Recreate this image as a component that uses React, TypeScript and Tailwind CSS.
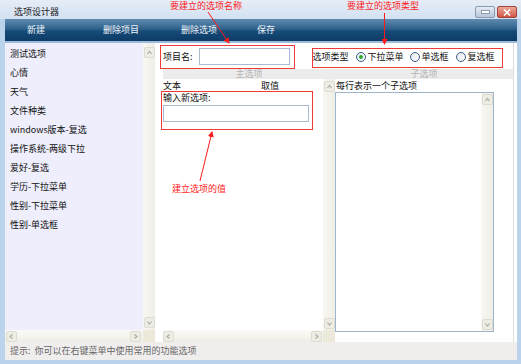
import React from "react";

const FONT = { fontFamily: '"Noto Sans CJK SC", "SimSun", sans-serif' };

type Dir = "up" | "down" | "left" | "right";

const CHEVRON: Record<Dir, string> = {
	up: "1.5,5 3.5,2.5 5.5,5",
	down: "1.5,2.5 3.5,5 5.5,2.5",
	left: "4.5,1.5 2,3.5 4.5,5.5",
	right: "2.5,1.5 5,3.5 2.5,5.5",
};

const ScrollBtn = ({ dir }: { dir: Dir }) => (
	<div className="w-[11px] h-[11px] shrink-0 rounded-[2px] bg-[#eeede5] border border-[#dedbd0] flex items-center justify-center">
		<svg width="7" height="7" viewBox="0 0 7 7">
			<polyline points={CHEVRON[dir]} fill="none" stroke="#aeac9f" strokeWidth="1.2" />
		</svg>
	</div>
);

const VScroll = ({ className = "" }: { className?: string }) => (
	<div className={`w-[12px] shrink-0 flex flex-col justify-between items-center bg-gradient-to-r from-[#f8f7f2] to-[#efeee6] ${className}`}>
		<ScrollBtn dir="up" />
		<ScrollBtn dir="down" />
	</div>
);

const HScroll = ({ className = "" }: { className?: string }) => (
	<div className={`h-[12px] flex items-center justify-between bg-gradient-to-b from-[#fbfaf6] to-[#eeede5] ${className}`}>
		<ScrollBtn dir="left" />
		<ScrollBtn dir="right" />
	</div>
);

const Radio = ({ checked = false }: { checked?: boolean }) => (
	<span className="w-[10px] h-[10px] rounded-full border border-[#3d5f88] bg-gradient-to-br from-[#e4e8ee] to-white flex items-center justify-center">
		{checked && <span className="w-[4px] h-[4px] rounded-full bg-[#2eaa2e]" />}
	</span>
);

const LIST = [
	"测试选项",
	"心情",
	"天气",
	"文件种类",
	"windows版本-复选",
	"操作系统-两级下拉",
	"爱好-复选",
	"学历-下拉菜单",
	"性别-下拉菜单",
	"性别-单选框",
];

const TOOLS = [
	{ label: "新建", ml: "ml-[22px]" },
	{ label: "删除项目", ml: "ml-[58px]" },
	{ label: "删除选项", ml: "ml-[42px]" },
	{ label: "保存", ml: "ml-[40px]" },
];

export default function App() {
	return (
		<div
			className="relative w-[521px] h-[364px] overflow-hidden flex flex-col bg-[#bcd3ec] text-[9px] leading-[12px] text-[#111]"
			style={FONT}
		>
			{/* Title bar */}
			<div className="h-[19px] shrink-0 flex items-center bg-gradient-to-b from-[#e6edf6] to-[#d2e1f1]">
				<span className="pl-[14px] pt-[4px] text-[9px] text-[#1b1b1b]">选项设计器</span>
				<div className="ml-auto mr-[4px] mt-[5px] flex gap-[2px]">
					<div className="w-[20px] h-[12px] rounded-[2px] border border-[#8a9bb0] bg-gradient-to-b from-[#e6ecf3] to-[#b7c6d8] flex items-end justify-center pb-[3px]">
						<span className="w-[7px] h-[2px] bg-white border border-[#8a9bb0] box-content" />
					</div>
					<div className="w-[20px] h-[12px] rounded-[2px] border border-[#a3453a] bg-gradient-to-b from-[#eba797] to-[#cf5546] flex items-center justify-center">
						<svg width="8" height="7" viewBox="0 0 8 7">
							<path d="M1 0.5 L7 6.5 M7 0.5 L1 6.5" stroke="white" strokeWidth="1.6" />
						</svg>
					</div>
				</div>
			</div>

			{/* Client */}
			<div className="flex-1 min-h-0 ml-[5px] mr-[4px] flex flex-col bg-white">
				{/* Toolbar */}
				<div className="h-[22px] shrink-0 flex items-center text-[#eef4fa] bg-[linear-gradient(to_bottom,#5f8bb0_0%,#2f618b_45%,#164b78_55%,#0d3b65_100%)]">
					{TOOLS.map((t) => (
						<span key={t.label} className={t.ml}>
							{t.label}
						</span>
					))}
				</div>
				<div className="h-[2px] shrink-0 bg-[#9dbcdc]" />

				{/* Content */}
				<div className="flex-1 min-h-0 flex">
					{/* Left list */}
					<div className="w-[150px] shrink-0 flex flex-col">
						<div className="flex-1 min-h-0 flex">
							<div className="w-[138px] bg-[#eeeefc] pt-[1.5px] pl-[5px]">
								{LIST.map((item) => (
									<div key={item} className="h-[19px] flex items-center">
										{item}
									</div>
								))}
							</div>
							<VScroll className="pt-[4px] pb-[2px]" />
						</div>
						<div className="flex">
							<HScroll className="w-[138px] pl-[1px] pr-[2px]" />
							<div className="w-[12px] bg-[#ece9da]" />
						</div>
					</div>

					{/* Form */}
					<div className="flex-1 min-w-0 flex flex-col pl-[8px] mr-[3px] border-r border-[#dcdcdc]">
						<div className="h-[26px] shrink-0 flex items-center pt-[1px]">
							<span>项目名:</span>
							<div className="ml-[6px] w-[91px] h-[17px] border border-[#a9bbd0] bg-white" />
							<span className="ml-[23px]">选项类型</span>
							<span className="ml-[7px] flex items-center gap-[2px]">
								<Radio checked />
								<span>下拉菜单</span>
							</span>
							<span className="ml-[6px] flex items-center gap-[2px]">
								<Radio />
								<span>单选框</span>
							</span>
							<span className="ml-[7px] flex items-center gap-[2px]">
								<Radio />
								<span>复选框</span>
							</span>
						</div>

						<div className="h-[10px] shrink-0 flex items-center bg-[#ececec] text-[#b3b3b3] leading-[10px]">
							<span className="w-[172px] text-center">主选项</span>
							<span className="flex-1 text-center">子选项</span>
						</div>

						<div className="flex-1 min-h-0 flex">
							{/* Main options */}
							<div className="w-[172px] shrink-0 flex flex-col">
								<div className="flex-1 min-h-0 flex">
									<div className="w-[160px]">
										<div className="h-[12px] mt-[1px] flex items-center">
											<span>文本</span>
											<span className="ml-[80px]">取值</span>
										</div>
										<div className="h-[12px] flex items-center">输入新选项:</div>
										<div className="mt-[1px] w-[146px] h-[17px] border border-[#a9bbd0] bg-white" />
									</div>
									<VScroll className="pt-[2px] pb-[1px]" />
								</div>
								<div className="flex">
									<HScroll className="w-[160px] pr-[1px]" />
									<div className="w-[12px] bg-[#ece9da]" />
								</div>
							</div>

							{/* Sub options */}
							<div className="flex-1 min-w-0 flex flex-col">
								<div className="h-[13px] shrink-0 pl-[1px] pt-[1px]">每行表示一个子选项</div>
								<div className="w-[159px] h-[240px] border border-[#9fb4cd] bg-white flex justify-end">
									<VScroll className="w-[11px] pt-[1px] pb-[1px]" />
								</div>
							</div>
						</div>
					</div>
				</div>

				{/* Status bar */}
				<div className="h-[18px] shrink-0 flex items-center pl-[5px] bg-[#f0eded] text-[#666]">
					提示:&nbsp;&nbsp;你可以在右键菜单中使用常用的功能选项
				</div>
			</div>
			<div className="h-[4px] shrink-0" />

			{/* Annotations */}
			<div className="absolute left-[160px] top-[45px] w-[135px] h-[24px] border border-[#f03a3a]" />
			<div className="absolute left-[312px] top-[48px] w-[191px] h-[20px] border border-[#f03a3a]" />
			<div className="absolute left-[161px] top-[91px] w-[152px] h-[39px] border border-[#f03a3a]" />

			<span className="absolute left-[170px] top-[0px] text-[#ff1a1a]">要建立的选项名称</span>
			<span className="absolute left-[347px] top-[0px] text-[#ff1a1a]">要建立的选项类型</span>
			<span className="absolute left-[172px] top-[183px] text-[#ff1a1a]">建立选项的值</span>

			<svg className="absolute left-0 top-0 pointer-events-none" width="521" height="364">
				<defs>
					<marker id="ah" markerWidth="6" markerHeight="6" refX="5" refY="3" orient="auto">
						<path d="M0,0 L6,3 L0,6 Z" fill="#ff1a1a" />
					</marker>
				</defs>
				<line x1="208" y1="12" x2="229" y2="43" stroke="#ff1a1a" strokeWidth="1" markerEnd="url(#ah)" />
				<line x1="384.5" y1="13" x2="384.5" y2="44" stroke="#ff1a1a" strokeWidth="1" markerEnd="url(#ah)" />
				<line x1="200" y1="181" x2="212" y2="132" stroke="#ff1a1a" strokeWidth="1" markerEnd="url(#ah)" />
			</svg>
		</div>
	);
}
